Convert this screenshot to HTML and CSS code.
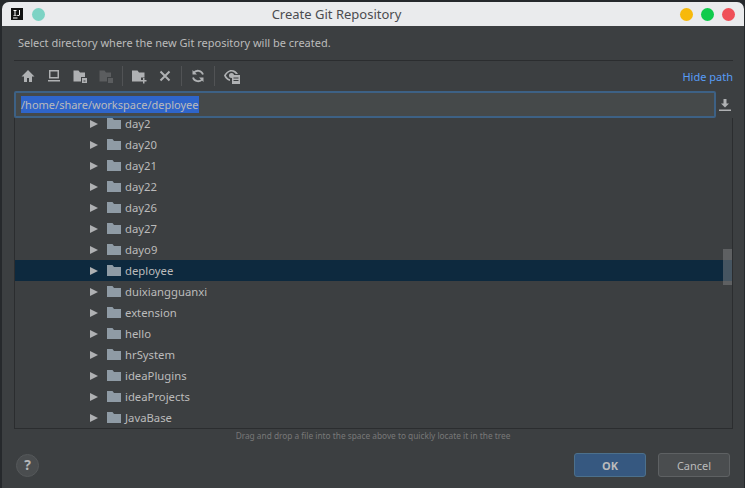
FILE: index.html
```html
<!DOCTYPE html>
<html lang="en">
<head>
    <meta charset="UTF-8">
    <meta name="viewport" content="width=device-width, initial-scale=1.0">
    <title>Create Git Repository</title>
    <link rel="stylesheet" href="styles.css">
</head>
<body>
    <div class="window">
        <header class="titlebar">
            <div class="title-left">
                <svg class="app-icon" width="12" height="12" viewBox="0 0 12 12">
                    <rect width="12" height="12" fill="#111"/>
                    <path d="M2 9.5h4.5v1H2zM2.5 2h3v.9h-1v4h1v.9h-3v-.9h1v-4h-1zM8 2h1v4.6c0 .9-.7 1.4-1.6 1.4-.6 0-1.1-.2-1.4-.6l.6-.7c.2.2.5.4.8.4.4 0 .6-.2.6-.6z" fill="#fff"/>
                </svg>
                <span class="dot dot-teal"></span>
            </div>
            <span class="title-text">Create Git Repository</span>
            <div class="title-right">
                <span class="dot dot-yellow"></span>
                <span class="dot dot-green"></span>
                <span class="dot dot-red"></span>
            </div>
        </header>

        <p class="intro">Select directory where the new Git repository will be created.</p>

        <div class="toolbar">
            <div class="tools">
                <svg class="tool" viewBox="0 0 16 16"><path d="M8 2 1.5 8.500H4V14h3v-4h2v4h3V8.500h2.500z" fill="#afb1b3"/></svg>
                <svg class="tool" viewBox="0 0 16 16"><path d="M3 2h10v8.500H3zM4.500 3.500v5.500h7V3.500zM2 12h12v1.500H2z" fill="#afb1b3" fill-rule="evenodd"/></svg>
                <svg class="tool" viewBox="0 0 16 16"><path d="M1.500 2.500h5l1.500 2h5v4.500H9v4.500H1.500z" fill="#afb1b3"/><path d="M10 10h5v5h-5z" fill="#afb1b3"/><path d="M11.500 12.500h2v1h-2z" fill="#3c3f41"/></svg>
                <svg class="tool" viewBox="0 0 16 16"><path d="M1.500 2.500h5l1.500 2h5v4.500H9v4.500H1.500z" fill="#5b5d5f"/><path d="M10 10h5v5h-5z" fill="#5b5d5f"/></svg>
                <span class="tool-sep"></span>
                <svg class="tool" viewBox="0 0 16 16"><path d="M1 2.500h5.500l1.500 2h5.500v5H10v4H1z" fill="#afb1b3"/><path d="M12 10h1.500v2h2v1.500h-2v2H12v-2h-2V12h2z" fill="#afb1b3"/></svg>
                <svg class="tool" viewBox="0 0 16 16"><path d="M3.500 3.500l9 9M12.500 3.500l-9 9" stroke="#afb1b3" stroke-width="2" fill="none"/></svg>
                <span class="tool-sep"></span>
                <svg class="tool" viewBox="0 0 16 16"><path d="M13 6.500A5.300 5.300 0 0 0 3.600 5M3 9.500A5.300 5.300 0 0 0 12.400 11" stroke="#afb1b3" stroke-width="1.800" fill="none"/><path d="M2.500 2v4.500H7zM13.500 14V9.500H9z" fill="#afb1b3"/></svg>
                <span class="tool-sep"></span>
                <svg class="tool tool-wide" viewBox="0 0 18 16"><path d="M1 7.500C2.500 4.500 5.500 2 8.500 2s5 1.500 6.500 4h-2.200C11.600 4.500 10 3.600 8.500 3.600 6 3.600 4 5.500 2.900 7.500 3.800 9.300 5 10.600 7 11.300V13C4 12.300 2 10.200 1 7.500z" fill="#afb1b3"/><circle cx="8.500" cy="7.500" r="2.500" fill="#afb1b3"/><path d="M9 7h8v9H9z" fill="#afb1b3"/><path d="M10.500 9.500h5v1h-5zM10.500 12h5v1h-5z" fill="#3c3f41"/></svg>
            </div>
            <a class="hide-path">Hide path</a>
        </div>

        <div class="path-row">
            <div class="path-field"><span class="path-selected">/home/share/workspace/deployee</span></div>
            <svg class="download" viewBox="0 0 14 14" width="14" height="14"><path d="M5.500 1h3v4.500H11L7 9.500 3 5.500h2.500zM1 11.500h12V13H1z" fill="#afb1b3"/></svg>
        </div>

        <div class="tree">
            <ul class="tree-list">
                <li class="row"><span class="arrow"></span><svg class="folder" viewBox="0 0 14 11"><path d="M0 0h5.500l1.500 2H14v9H0z"/></svg>day2</li>
                <li class="row"><span class="arrow"></span><svg class="folder" viewBox="0 0 14 11"><path d="M0 0h5.500l1.500 2H14v9H0z"/></svg>day20</li>
                <li class="row"><span class="arrow"></span><svg class="folder" viewBox="0 0 14 11"><path d="M0 0h5.500l1.500 2H14v9H0z"/></svg>day21</li>
                <li class="row"><span class="arrow"></span><svg class="folder" viewBox="0 0 14 11"><path d="M0 0h5.500l1.500 2H14v9H0z"/></svg>day22</li>
                <li class="row"><span class="arrow"></span><svg class="folder" viewBox="0 0 14 11"><path d="M0 0h5.500l1.500 2H14v9H0z"/></svg>day26</li>
                <li class="row"><span class="arrow"></span><svg class="folder" viewBox="0 0 14 11"><path d="M0 0h5.500l1.500 2H14v9H0z"/></svg>day27</li>
                <li class="row"><span class="arrow"></span><svg class="folder" viewBox="0 0 14 11"><path d="M0 0h5.500l1.500 2H14v9H0z"/></svg>dayo9</li>
                <li class="row row-selected"><span class="arrow"></span><svg class="folder" viewBox="0 0 14 11"><path d="M0 0h5.500l1.500 2H14v9H0z"/></svg>deployee</li>
                <li class="row"><span class="arrow"></span><svg class="folder" viewBox="0 0 14 11"><path d="M0 0h5.500l1.500 2H14v9H0z"/></svg>duixiangguanxi</li>
                <li class="row"><span class="arrow"></span><svg class="folder" viewBox="0 0 14 11"><path d="M0 0h5.500l1.500 2H14v9H0z"/></svg>extension</li>
                <li class="row"><span class="arrow"></span><svg class="folder" viewBox="0 0 14 11"><path d="M0 0h5.500l1.500 2H14v9H0z"/></svg>hello</li>
                <li class="row"><span class="arrow"></span><svg class="folder" viewBox="0 0 14 11"><path d="M0 0h5.500l1.500 2H14v9H0z"/></svg>hrSystem</li>
                <li class="row"><span class="arrow"></span><svg class="folder" viewBox="0 0 14 11"><path d="M0 0h5.500l1.500 2H14v9H0z"/></svg>ideaPlugins</li>
                <li class="row"><span class="arrow"></span><svg class="folder" viewBox="0 0 14 11"><path d="M0 0h5.500l1.500 2H14v9H0z"/></svg>ideaProjects</li>
                <li class="row"><span class="arrow"></span><svg class="folder" viewBox="0 0 14 11"><path d="M0 0h5.500l1.500 2H14v9H0z"/></svg>JavaBase</li>
            </ul>
            <div class="scroll-thumb"></div>
        </div>

        <p class="hint">Drag and drop a file into the space above to quickly locate it in the tree</p>

        <footer class="footer">
            <span class="help">?</span>
            <div class="buttons">
                <button class="btn btn-primary">OK</button>
                <button class="btn">Cancel</button>
            </div>
        </footer>
    </div>
</body>
</html>
```

FILE: styles.css
```css
html, body {
    margin: 0;
    padding: 0;
    height: 100%;
    overflow: hidden;
}
body {
    font-family: "Noto Sans", "Open Sans", sans-serif;
    font-size: 11px;
    background: #26292c;
    color: #bbbbbb;
}
.window {
    margin: 2px 1px 0 2px;
    height: 486px;
    background: #3c3f41;
    border-radius: 7px 7px 0 0;
    overflow: hidden;
}
.titlebar {
    height: 24px;
    background: #eaebed;
    display: flex;
    align-items: center;
    justify-content: space-between;
    position: relative;
    padding: 0 9px 0 9px;
}
.title-left, .title-right {
    display: flex;
    align-items: center;
}
.title-left {
    gap: 9px;
}
.title-right {
    gap: 8px;
}
.title-text {
    position: absolute;
    left: 0;
    right: 73px;
    text-align: center;
    color: #4a4c50;
    font-size: 13px;
}
.dot {
    width: 13px;
    height: 13px;
    border-radius: 50%;
}
.dot-teal { background: #7dd3c4; }
.dot-yellow { background: #f7b90b; }
.dot-green { background: #0fcb4c; }
.dot-red { background: #ef5058; }
.intro {
    margin: 0 12px 0 16px;
    height: 34px;
    line-height: 34px;
}
.toolbar {
    margin: 0 11px 0 12px;
    height: 30px;
    border-top: 1px solid #2b2d2f;
    display: flex;
    align-items: center;
    justify-content: space-between;
}
.tools {
    display: flex;
    align-items: center;
    padding-left: 6px;
    gap: 10px;
}
.tool {
    width: 16px;
    height: 16px;
}
.tool-wide {
    width: 18px;
}
.tool-sep {
    width: 1px;
    height: 20px;
    margin: 0 -2px;
    background: #515355;
}
.hide-path {
    color: #589df6;
}
.path-row {
    display: flex;
    align-items: center;
    margin-left: 12px;
    height: 27px;
}
.path-field {
    width: 702px;
    height: 27px;
    box-sizing: border-box;
    background: #45494a;
    border: 2px solid #3d6185;
    border-radius: 2px;
    padding-left: 5px;
    display: flex;
    align-items: center;
    flex: none;
}
.path-selected {
    background: #2f65ca;
    color: #bbbbbb;
    line-height: 17px;
}
.download {
    margin-left: 2px;
}
.tree {
    position: relative;
    margin: 0 11px 0 12px;
    height: 311px;
    box-sizing: border-box;
    border: 1px solid #2b2d2f;
    border-top: 0;
    overflow: hidden;
}
.tree-list {
    list-style: none;
    margin: -5px 0 0;
    padding: 0;
}
.row {
    height: 21px;
    line-height: 21px;
    display: flex;
    align-items: center;
    padding-left: 75px;
    font-size: 11.300px;
}
.row-selected {
    background: #0d293e;
}
.arrow {
    width: 0;
    height: 0;
    border-left: 8px solid #afb1b3;
    border-top: 4.5px solid transparent;
    border-bottom: 4.5px solid transparent;
    margin-right: 9px;
}
.folder {
    width: 14px;
    height: 11px;
    fill: #8f9ba5;
    margin-right: 4px;
    flex: none;
}
.scroll-thumb {
    position: absolute;
    top: 131px;
    right: 0;
    width: 9px;
    height: 36px;
    background: rgba(128, 130, 132, 0.5);
}
.hint {
    margin: 0;
    height: 16px;
    line-height: 13px;
    text-align: center;
    font-size: 8.300px;
    color: #787878;
}
.footer {
    display: flex;
    align-items: center;
    justify-content: space-between;
    padding: 8px 14px 0 14px;
}
.help {
    width: 23px;
    height: 23px;
    box-sizing: border-box;
    border: 1px solid #55585a;
    background: #4a4d4f;
    border-radius: 50%;
    text-align: center;
    line-height: 20px;
    font-size: 14px;
    font-weight: bold;
    color: #b5b7b9;
}
.buttons {
    display: flex;
    gap: 12px;
}
.btn {
    width: 72px;
    height: 24px;
    box-sizing: border-box;
    font-family: inherit;
    font-size: 11px;
    color: #bbbbbb;
    background: #4a4d4f;
    border: 1px solid #5e6163;
    border-radius: 3px;
    padding: 0;
}
.btn-primary {
    background: #365880;
    border-color: #4c708c;
    font-weight: bold;
}
```
